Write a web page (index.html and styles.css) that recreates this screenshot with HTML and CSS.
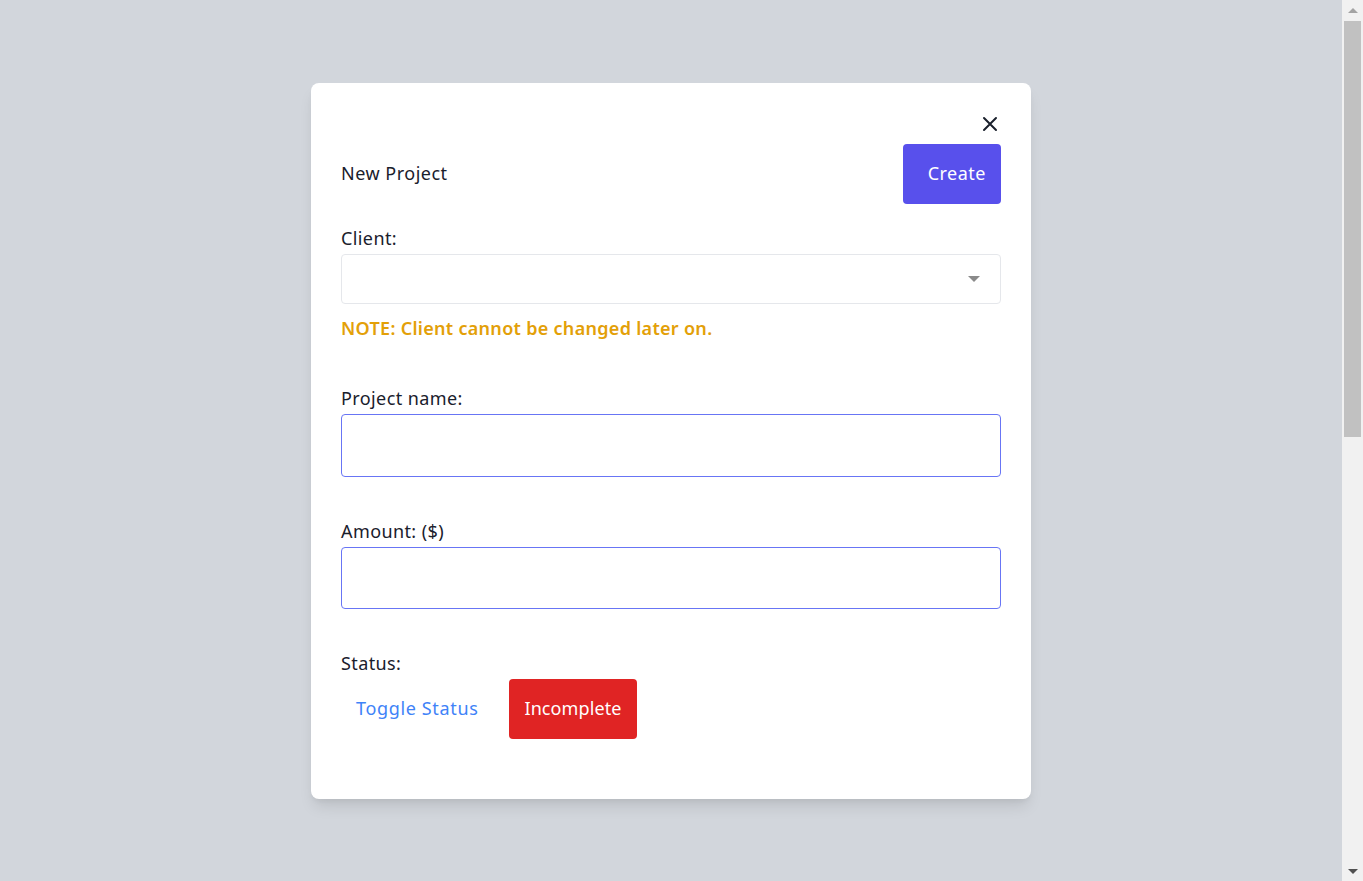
FILE: index.html
```html
<!DOCTYPE html>
<html>
<head>
<meta charset="utf-8">
<title>New Project</title>
<link rel="stylesheet" href="styles.css">
</head>
<body>
<div class="page">
  <div class="modal">
    <div class="close-row">
      <button class="close-btn" aria-label="Close">
        <svg width="16" height="16" viewBox="0 0 16 16"><path d="M2 2 L14 14 M14 2 L2 14" stroke="#1a202c" stroke-width="2" fill="none" stroke-linecap="round"/></svg>
      </button>
    </div>
    <div class="header">
      <h2 class="title">New Project</h2>
      <button class="btn btn-create">Create</button>
    </div>
    <div class="field">
      <label class="label">Client:</label>
      <div class="select">
        <span class="caret"></span>
      </div>
      <p class="note">NOTE: Client cannot be changed later on.</p>
    </div>
    <div class="field field-name">
      <label class="label">Project name:</label>
      <input class="input" type="text">
    </div>
    <div class="field">
      <label class="label">Amount: ($)</label>
      <input class="input input-amount" type="text">
    </div>
    <div class="field">
      <label class="label label-status">Status:</label>
      <div class="status-row">
        <button class="btn btn-link">Toggle Status</button>
        <button class="btn btn-red">Incomplete</button>
      </div>
    </div>
  </div>
</div>
<div class="scrollbar" aria-hidden="true">
  <div class="sb-btn"><span class="sb-up"></span></div>
  <div class="sb-track"><div class="sb-thumb"></div></div>
  <div class="sb-btn"><span class="sb-down"></span></div>
</div>
</body>
</html>
```
FILE: styles.css
```css
html, body {
  margin: 0;
  padding: 0;
}
body {
  background: #d2d6dc;
  font-family: "Noto Sans", "Open Sans", sans-serif;
  color: #1a202c;
  display: flex;
  align-items: flex-start;
  min-height: 1770px;
}
.page {
  flex: 1;
  padding-top: 83px;
}
.scrollbar {
  width: 21px;
  height: 100vh;
  position: sticky;
  top: 0;
  background: #f1f1f1;
  display: flex;
  flex-direction: column;
}
.sb-btn {
  height: 21px;
  display: flex;
  align-items: center;
  justify-content: center;
}
.sb-up {
  width: 0;
  height: 0;
  border-left: 5px solid transparent;
  border-right: 5px solid transparent;
  border-bottom: 5px solid #a3a3a3;
  margin-top: -1px;
}
.sb-down {
  width: 0;
  height: 0;
  border-left: 5px solid transparent;
  border-right: 5px solid transparent;
  border-top: 5px solid #505050;
  margin-top: 1px;
}
.sb-track {
  flex: 1;
  padding: 0 2px;
}
.sb-thumb {
  height: 416px;
  background: #c1c1c1;
}
.modal {
  width: 720px;
  box-sizing: border-box;
  margin: 0 auto;
  background: #fff;
  border-radius: 8px;
  padding: 30px 30px 60px;
  box-shadow: 0 10px 15px -3px rgba(0,0,0,0.1), 0 4px 6px -2px rgba(0,0,0,0.05);
}
.close-row {
  display: flex;
  justify-content: flex-end;
}
.close-btn {
  border: 0;
  background: none;
  padding: 3px 3px;
  margin-right: 0;
  display: flex;
  cursor: pointer;
}
.header {
  display: flex;
  justify-content: space-between;
  align-items: center;
  margin-top: 9px;
}
.title {
  margin: 0;
  font-size: 18px;
  font-weight: 400;
  letter-spacing: 0.5px;
  padding-bottom: 2px;
}
.btn {
  font-family: inherit;
  font-size: 18px;
  letter-spacing: 0.5px;
  border: 0;
  border-radius: 4px;
  height: 60px;
  padding-top: 0;
  padding-bottom: 3px;
  cursor: pointer;
}
.btn-create {
  background: #5850ec;
  color: #fff;
  padding-left: 25px;
  padding-right: 15px;
}
.field {
  margin-top: 20px;
  display: flex;
  flex-direction: column;
}
.field + .field {
  margin-top: 40px;
}
.field.field-name {
  margin-top: 43px;
}
.label {
  font-size: 18px;
  letter-spacing: 0.4px;
  line-height: 28px;
  margin-bottom: 2px;
}
.select {
  height: 50px;
  box-sizing: border-box;
  border: 1px solid #e5e7eb;
  border-radius: 4px;
  display: flex;
  align-items: center;
  justify-content: flex-end;
  padding-right: 20px;
}
.caret {
  width: 0;
  height: 0;
  border-left: 6px solid transparent;
  border-right: 6px solid transparent;
  border-top: 6px solid #8a8a8a;
}
.note {
  margin: 11px 0 0;
  color: #e3a008;
  font-weight: 600;
  font-size: 18px;
  letter-spacing: 0.3px;
  line-height: 26px;
}
.input {
  height: 63px;
  box-sizing: border-box;
  border: 1px solid #6875f5;
  border-radius: 4px;
  font-family: inherit;
  font-size: 18px;
  padding: 0 12px;
  outline: none;
}
.input.input-amount {
  height: 62px;
}
.status-row {
  display: flex;
  align-items: center;
  gap: 16px;
}
.btn-link {
  background: none;
  color: #3f83f8;
  letter-spacing: 0.65px;
  padding-left: 15px;
  padding-right: 15px;
}
.btn-red {
  background: #e02424;
  color: #fff;
  letter-spacing: 0.1px;
  padding-left: 15px;
  padding-right: 15px;
}
```
